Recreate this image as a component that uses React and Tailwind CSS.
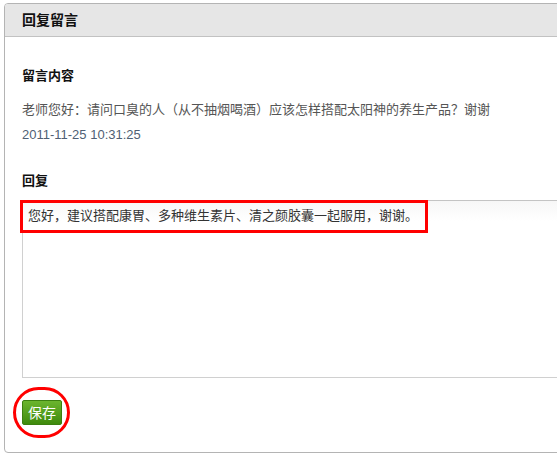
const cjk = { fontFamily: '"Liberation Sans", "Noto Sans CJK SC", sans-serif' }

export default function App() {
  return (
    <div className="w-[557px] h-[455px] overflow-hidden bg-white" style={cjk}>
      <div className="ml-[4px] mt-[3px] w-[620px] h-[450px] rounded-[4px] border border-[#b4b4b4] overflow-hidden">
        <div className="h-[33px] bg-[#e6e6e6] border-b border-[#c2c2c2] flex items-center pl-[17px]">
          <span className="text-[14px] font-bold text-[#111]">回复留言</span>
        </div>
        <div className="pl-[17px]">
          <h3 className="mt-[31px] text-[13px] leading-[16px] font-bold text-[#111]">留言内容</h3>
          <p className="mt-[18px] text-[13px] leading-[16px] text-[#555]">
            老师您好：请问口臭的人（从不抽烟喝酒）应该怎样搭配太阳神的养生产品？谢谢
          </p>
          <p className="mt-[9px] text-[13px] leading-[16px] text-[#4f5f74]">2011-11-25 10:31:25</p>
          <h3 className="mt-[30px] text-[13px] leading-[16px] font-bold text-[#111]">回复</h3>
          <div className="relative mt-[11px] w-[560px] h-[178px] border border-[#d0d0d0] border-t-[#c4c4c4] bg-gradient-to-b from-[#f7f7f7] to-white to-[20px]">
            <div className="absolute -left-[3px] -top-[1px] w-[408px] h-[33px] border-[3px] border-[#ff0000]" />
            <p className="pt-[7px] pl-[5px] text-[13px] leading-[16px] text-[#333]">
              您好，建议搭配康胃、多种维生素片、清之颜胶囊一起服用，谢谢。
            </p>
          </div>
          <div className="relative mt-[22px] w-fit">
            <div className="absolute -left-[9px] -top-[13px] w-[57px] h-[51px] rounded-full border-[3px] border-[#ff0000]" />
            <button className="h-[25px] px-[5px] rounded-[2px] border border-[#3c7f10] bg-gradient-to-b from-[#6bb52e] to-[#3f8a0c] text-white text-[14px] leading-[16px]">
              保存
            </button>
          </div>
        </div>
      </div>
    </div>
  )
}
